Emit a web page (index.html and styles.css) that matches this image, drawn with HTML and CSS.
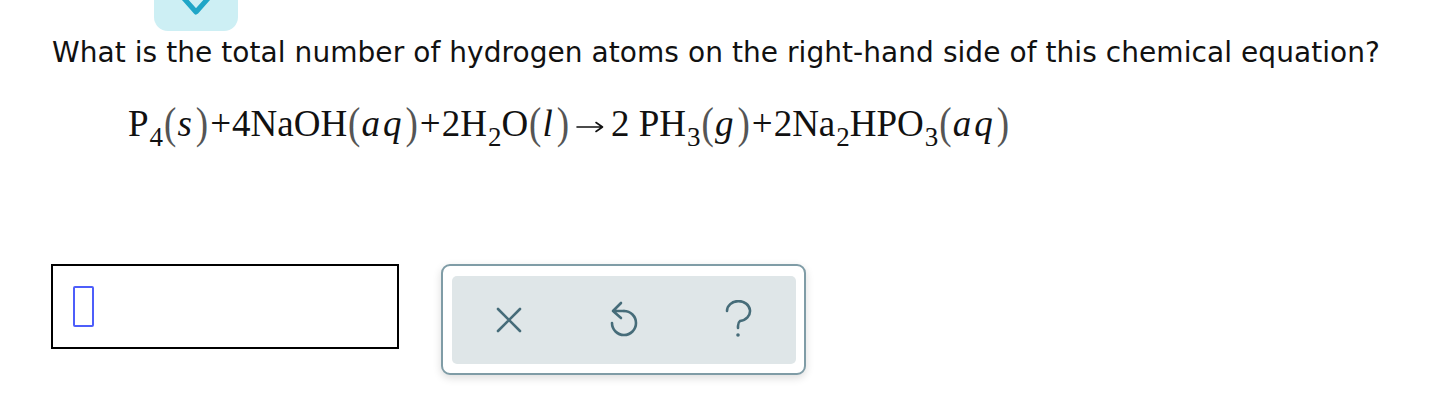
FILE: index.html
```html
<!DOCTYPE html>
<html>
<head>
<meta charset="utf-8">
<link rel="stylesheet" href="styles.css">
</head>
<body>
<div class="tab">
  <svg class="chev" width="84" height="20" viewBox="0 0 84 20"><polyline points="26,-6 42,12 58,-6" fill="none" stroke="#1fa6c7" stroke-width="5" stroke-linecap="round" stroke-linejoin="round"/></svg>
</div>
<p class="question">What is the total number of hydrogen atoms on the right-hand side of this chemical equation?</p>
<div class="eq">P<sub>4</sub><span class="par">(</span><i>s</i><span class="par">)</span><span class="op">+</span>4NaOH<span class="par">(</span><i>a</i><i>q</i><span class="par">)</span><span class="op">+</span>2H<sub>2</sub>O<span class="par">(</span><i>l</i><span class="par">)</span><svg class="arrow" width="28" height="12" viewBox="0 0 28 12"><path d="M1 6 L26 6 M20 1.5 L26.5 6 L20 10.5" stroke="#111" stroke-width="1.6" fill="none" stroke-linecap="round" stroke-linejoin="round"/></svg>2 PH<sub>3</sub><span class="par">(</span><i>g</i><span class="par">)</span><span class="op">+</span>2Na<sub>2</sub>HPO<sub>3</sub><span class="par">(</span><i>a</i><i>q</i><span class="par">)</span></div>
<div class="row">
  <div class="answer"><span class="cursor"></span></div>
  <div class="panel">
    <div class="tools">
      <div class="tool"><svg width="28" height="28" viewBox="0 0 28 28"><path d="M3 3 L25 25 M25 3 L3 25" stroke="#466c79" stroke-width="2.6" stroke-linecap="round" fill="none"/></svg></div>
      <div class="tool"><svg width="32" height="38" viewBox="0 0 32 38"><path d="M16 10 A12 12 0 1 1 4 22" stroke="#466c79" stroke-width="2.6" stroke-linecap="round" fill="none"/><path d="M13 2 L5 10 L13 17 M5 10 L16 10" stroke="#466c79" stroke-width="2.6" stroke-linecap="round" stroke-linejoin="round" fill="none"/></svg></div>
      <div class="tool"><svg width="30" height="40" viewBox="0 0 30 40"><path d="M3 11 A11.5 10 0 1 1 16 21 Q14 22.5 14 26 L14 28" stroke="#466c79" stroke-width="2.6" stroke-linecap="round" fill="none"/><circle cx="14" cy="35" r="1.8" fill="#466c79"/></svg></div>
    </div>
  </div>
</div>
</body>
</html>
```
FILE: styles.css
```css
html, body {
  margin: 0;
  padding: 0;
  background: #fff;
}
body {
  width: 1444px;
  height: 412px;
  overflow: hidden;
}
.tab {
  margin-left: 154px;
  width: 84px;
  height: 31px;
  background: #cdeff4;
  border-radius: 0 0 14px 14px;
}
.chev {
  display: block;
}
.question {
  margin: 5px 0 0 52px;
  font-family: "DejaVu Sans", Verdana, sans-serif;
  font-size: 28px;
  line-height: 34px;
  letter-spacing: 0.06px;
  color: #111;
  white-space: nowrap;
}
.eq {
  margin: 32px 0 0 128px;
  font-family: "Liberation Serif", "Times New Roman", serif;
  font-size: 37px;
  line-height: 44px;
  height: 44px;
  color: #111;
  white-space: nowrap;
}
.eq sub {
  font-size: 27px;
  vertical-align: -10px;
  line-height: 0;
  margin-left: 1px;
}
.eq i {
  font-style: italic;
  margin-right: 3px;
}
.par {
  display: inline-block;
  color: #555;
  transform: scaleY(1.2);
  margin: 0 1px;
}
.op {
  margin: 0 1px;
}
.arrow {
  margin: 0 7px 0 6px;
  vertical-align: 3px;
}
.row {
  display: flex;
  align-items: flex-start;
  gap: 42px;
  margin: 118px 0 0 51px;
}
.answer {
  box-sizing: border-box;
  width: 348px;
  height: 85px;
  border: 2px solid #000;
  padding: 20px 0 0 20px;
}
.cursor {
  display: block;
  box-sizing: border-box;
  width: 21px;
  height: 41px;
  border: 2px solid #4d5efa;
  border-radius: 2px;
}
.panel {
  box-sizing: border-box;
  width: 365px;
  height: 111px;
  border: 2px solid #7f9ca6;
  border-radius: 9px;
  padding: 10px 8px 9px 9px;
  background: #fff;
  box-shadow: 0 3px 8px rgba(0, 0, 0, 0.14);
}
.tools {
  height: 100%;
  background: #dfe6e8;
  border-radius: 5px;
  display: grid;
  grid-template-columns: repeat(3, 1fr);
  align-items: center;
  justify-items: center;
}
.tool svg {
  display: block;
}
```
